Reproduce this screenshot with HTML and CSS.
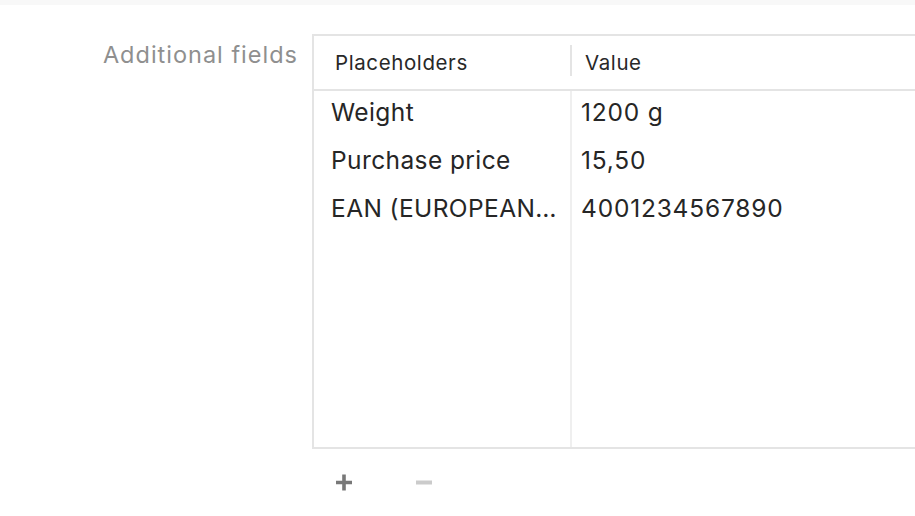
FILE: index.html
```html
<!DOCTYPE html>
<html>
<head>
<meta charset="utf-8">
<link rel="stylesheet" href="styles.css">
</head>
<body>
<div class="topbar"></div>
<div class="form-row">
  <div class="label">Additional fields</div>
  <div class="field">
    <div class="table">
      <div class="thead">
        <div class="th c1">Placeholders</div>
        <div class="th c2">Value</div>
      </div>
      <div class="tbody">
        <div class="col c1">
          <div class="cell">Weight</div>
          <div class="cell">Purchase price</div>
          <div class="cell">EAN (EUROPEAN…</div>
        </div>
        <div class="col c2">
          <div class="cell">1200 g</div>
          <div class="cell">15,50</div>
          <div class="cell">4001234567890</div>
        </div>
      </div>
    </div>
    <div class="actions">
      <button class="btn add" aria-label="Add">
        <svg width="16" height="17" viewBox="0 0 16 17"><path d="M8 0.5V16.5M0 8.5H16" stroke="#787878" stroke-width="3.6" fill="none"/></svg>
      </button>
      <button class="btn remove" aria-label="Remove">
        <svg width="16" height="5" viewBox="0 0 16 5"><path d="M0 2.5H16" stroke="#cbcbcb" stroke-width="4" fill="none"/></svg>
      </button>
    </div>
  </div>
</div>
</body>
</html>
```
FILE: styles.css
```css
html, body {
  margin: 0;
  padding: 0;
  background: #ffffff;
  overflow: hidden;
}
body {
  width: 915px;
  height: 516px;
  font-family: Inter, "Noto Sans", sans-serif;
  color: #262626;
}
.topbar {
  height: 5px;
  background: #f8f8f8;
}
.form-row {
  display: flex;
  margin-top: 29px;
}
.label {
  width: 298px;
  box-sizing: border-box;
  text-align: right;
  padding-top: 7px;
  font-size: 23.5px;
  line-height: 28px;
  color: #8f8f8f;
  letter-spacing: 1px;
}
.field {
  margin-left: 14px;
  flex: 1;
  display: flex;
  flex-direction: column;
}
.table {
  border-top: 2px solid #e4e4e4;
  border-left: 2px solid #e4e4e4;
  border-bottom: 2px solid #e4e4e4;
  margin-right: -10px;
}
.thead {
  display: flex;
  height: 53px;
  border-bottom: 2px solid #e4e4e4;
  align-items: center;
}
.th {
  font-size: 20.5px;
  color: #282828;
  position: relative;
  letter-spacing: 0.6px;
}
.thead .c1 {
  width: 256px;
  padding-left: 21px;
  box-sizing: border-box;
}
.thead .c2 {
  padding-left: 15px;
}
.thead .c2::before {
  content: "";
  position: absolute;
  left: 0;
  top: -5px;
  width: 2px;
  height: 31px;
  background: #e4e4e4;
}
.tbody {
  display: flex;
  height: 356px;
}
.col {
  display: flex;
  flex-direction: column;
}
.tbody .c1 {
  border-right: 2px solid #efefef;
  padding-left: 17px;
  box-sizing: border-box;
  width: 258px;
  letter-spacing: 0.4px;
}
.tbody .c2 {
  padding-left: 9px;
  flex: 1;
  letter-spacing: 0.8px;
}
.cell {
  font-size: 24.5px;
  line-height: 40px;
  height: 48px;
  padding-top: 1px;
  box-sizing: border-box;
  white-space: nowrap;
}
.actions {
  display: flex;
  align-items: center;
  margin-top: 25px;
  padding-left: 24px;
  gap: 64px;
}
.btn {
  border: 0;
  background: none;
  padding: 0;
  margin: 0;
  display: flex;
  align-items: center;
  height: 17px;
}
```
